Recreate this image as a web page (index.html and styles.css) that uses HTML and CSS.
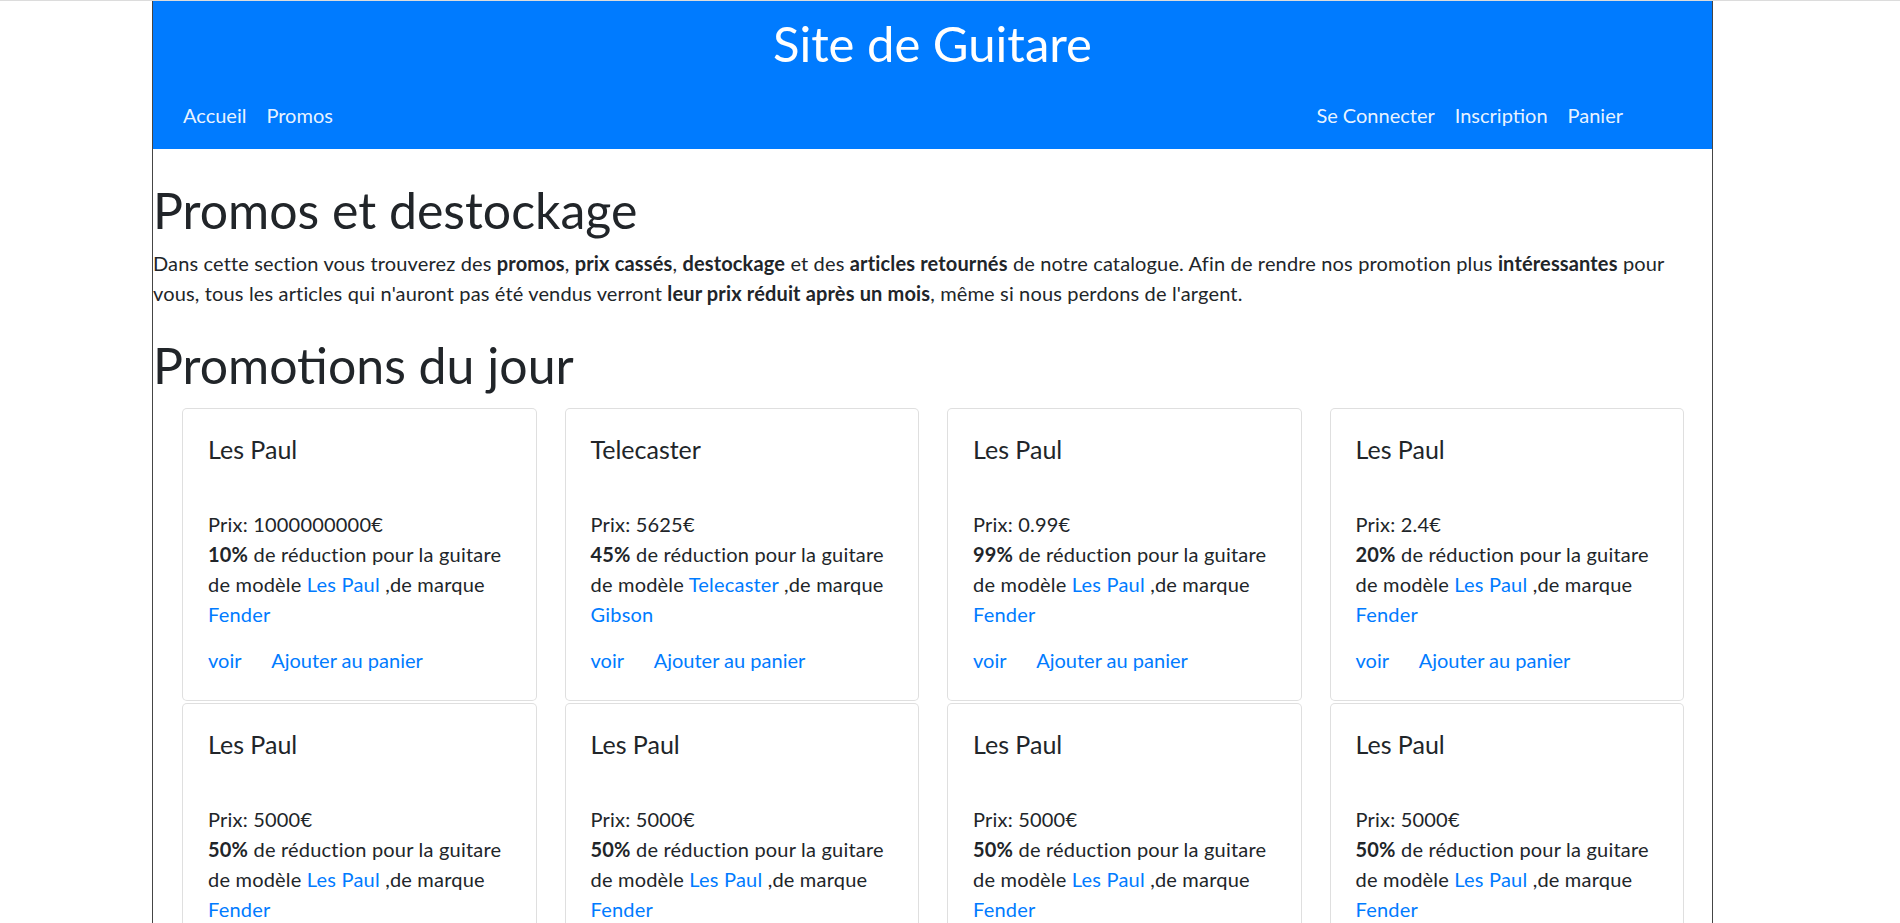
FILE: index.html
```html
<!DOCTYPE html>
<html lang="fr">
<head>
<meta charset="utf-8">
<title>Site de Guitare - Promos</title>
<link rel="stylesheet" href="styles.css">
</head>
<body>
<div class="page">
  <header class="site-header">
    <h1 class="site-title">Site de Guitare</h1>
    <nav class="site-nav">
      <ul class="nav-list">
        <li><a class="nav-link" href="#">Accueil</a></li>
        <li><a class="nav-link" href="#">Promos</a></li>
      </ul>
      <ul class="nav-list nav-right">
        <li><a class="nav-link" href="#">Se Connecter</a></li>
        <li><a class="nav-link" href="#">Inscription</a></li>
        <li><a class="nav-link" href="#">Panier</a></li>
      </ul>
    </nav>
  </header>

  <main class="content">
    <h1 class="page-title">Promos et destockage</h1>
    <p class="intro">Dans cette section vous trouverez des <b>promos</b>, <b>prix cassés</b>, <b>destockage</b> et des <b>articles retournés</b> de notre catalogue. Afin de rendre nos promotion plus <b>intéressantes</b> pour vous, tous les articles qui n'auront pas été vendus verront <b>leur prix réduit après un mois</b>, même si nous perdons de l'argent.</p>

    <h1 class="page-title section-title">Promotions du jour</h1>

    <div class="card-grid">
      <div class="card">
        <h5 class="card-title">Les Paul</h5>
        <p class="card-text">Prix: 1000000000€<br><b>10%</b> de réduction pour la guitare de modèle <a href="#">Les Paul</a> ,de marque <a href="#">Fender</a></p>
        <div class="card-links"><a class="card-link" href="#">voir</a> <a class="card-link" href="#">Ajouter au panier</a></div>
      </div>
      <div class="card">
        <h5 class="card-title">Telecaster</h5>
        <p class="card-text">Prix: 5625€<br><b>45%</b> de réduction pour la guitare de modèle <a href="#">Telecaster</a> ,de marque <a href="#">Gibson</a></p>
        <div class="card-links"><a class="card-link" href="#">voir</a> <a class="card-link" href="#">Ajouter au panier</a></div>
      </div>
      <div class="card">
        <h5 class="card-title">Les Paul</h5>
        <p class="card-text">Prix: 0.99€<br><b>99%</b> de réduction pour la guitare de modèle <a href="#">Les Paul</a> ,de marque <a href="#">Fender</a></p>
        <div class="card-links"><a class="card-link" href="#">voir</a> <a class="card-link" href="#">Ajouter au panier</a></div>
      </div>
      <div class="card">
        <h5 class="card-title">Les Paul</h5>
        <p class="card-text">Prix: 2.4€<br><b>20%</b> de réduction pour la guitare de modèle <a href="#">Les Paul</a> ,de marque <a href="#">Fender</a></p>
        <div class="card-links"><a class="card-link" href="#">voir</a> <a class="card-link" href="#">Ajouter au panier</a></div>
      </div>
      <div class="card">
        <h5 class="card-title">Les Paul</h5>
        <p class="card-text">Prix: 5000€<br><b>50%</b> de réduction pour la guitare de modèle <a href="#">Les Paul</a> ,de marque <a href="#">Fender</a></p>
        <div class="card-links"><a class="card-link" href="#">voir</a> <a class="card-link" href="#">Ajouter au panier</a></div>
      </div>
      <div class="card">
        <h5 class="card-title">Les Paul</h5>
        <p class="card-text">Prix: 5000€<br><b>50%</b> de réduction pour la guitare de modèle <a href="#">Les Paul</a> ,de marque <a href="#">Fender</a></p>
        <div class="card-links"><a class="card-link" href="#">voir</a> <a class="card-link" href="#">Ajouter au panier</a></div>
      </div>
      <div class="card">
        <h5 class="card-title">Les Paul</h5>
        <p class="card-text">Prix: 5000€<br><b>50%</b> de réduction pour la guitare de modèle <a href="#">Les Paul</a> ,de marque <a href="#">Fender</a></p>
        <div class="card-links"><a class="card-link" href="#">voir</a> <a class="card-link" href="#">Ajouter au panier</a></div>
      </div>
      <div class="card">
        <h5 class="card-title">Les Paul</h5>
        <p class="card-text">Prix: 5000€<br><b>50%</b> de réduction pour la guitare de modèle <a href="#">Les Paul</a> ,de marque <a href="#">Fender</a></p>
        <div class="card-links"><a class="card-link" href="#">voir</a> <a class="card-link" href="#">Ajouter au panier</a></div>
      </div>
    </div>
  </main>
</div>
</body>
</html>
```
FILE: styles.css
```css
* { box-sizing: border-box; }

html { background: #fff; }

body {
  margin: 0;
  border-top: 1px solid #dcdcdc;
  font-family: Lato, "Liberation Sans", Arial, sans-serif;
  font-size: 20px;
  line-height: 30px;
  color: #212529;
  background: #fff;
}

a { color: #007bff; text-decoration: none; }
b { font-weight: 700; }

.page {
  width: 1561px;
  margin-left: 152px;
  border-left: 1px solid #454545;
  border-right: 1px solid #454545;
  min-height: 922px;
}

/* Header */
.site-header {
  background: #007bff;
  padding: 13px 0 19px;
}

.site-title {
  margin: 0;
  text-align: center;
  color: #fff;
  font-size: 49px;
  font-weight: 400;
  line-height: 58px;
}

.site-nav {
  display: flex;
  justify-content: space-between;
  margin-top: 28px;
  padding: 0 79px 0 20px;
}

.nav-list {
  display: flex;
  list-style: none;
  margin: 0;
  padding: 0;
}

.nav-link {
  display: block;
  padding: 0 10px;
  color: rgba(255, 255, 255, 0.93);
  font-size: 20px;
  line-height: 30px;
}

/* Main content */
.page-title {
  margin: 31px 0 10px;
  font-size: 50px;
  font-weight: 400;
  line-height: 60px;
}

.section-title {
  margin-top: 27px;
  margin-bottom: 13px;
}

.intro {
  margin: -2px 0 20px;
  letter-spacing: 0.15px;
}

.card-grid {
  display: grid;
  grid-template-columns: repeat(4, 1fr);
  column-gap: 28px;
  row-gap: 2px;
  padding: 0 28px 0 29px;
}

.card {
  border: 1px solid rgba(0, 0, 0, 0.125);
  border-radius: 5px;
  padding: 25px;
  background: #fff;
}

.card-title {
  margin: 0 0 15px;
  font-size: 25px;
  font-weight: 400;
  line-height: 30px;
}

.card-text {
  margin: 0 0 16px;
  padding-top: 30px;
  letter-spacing: 0.2px;
}

.card-link + .card-link {
  margin-left: 25px;
}
```
